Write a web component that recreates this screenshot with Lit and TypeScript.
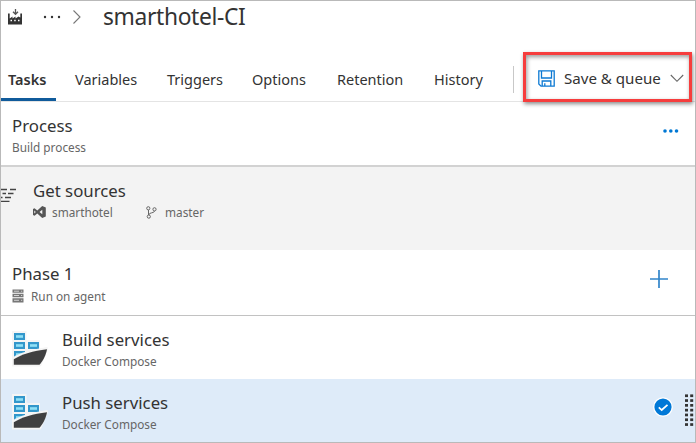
import { LitElement, html, css, svg } from "lit";
import { customElement } from "lit/decorators.js";

const shipIcon = html`<svg class="ship" width="36" height="36" viewBox="0 0 36 36">
  <path d="M0 0H14.5V9H28V17.5L35 16.5L35.5 18L28.5 35.5H0Z" fill="#f5f5f5"/>
  ${[[2, 2], [2, 11], [16, 11], [2, 20]].map(
    ([x, y]) => svg`<rect x=${x} y=${y} width="11" height="7" fill="#3397cb"/><rect x=${x + 2} y=${y + 2.2} width="7" height="2.6" fill="#8fe0f6"/>`
  )}
  <path d="M0.5 26.5C9 21 20 18.5 35.5 16L35.8 18.5L29 35H1Z" fill="#f5f5f5"/>
  <path d="M1.8 28.2C10 23 21 20 35 18.2C34 24 31 30 27.5 33.8H1.8Z" fill="#404041"/>
</svg>`;

@customElement("app-root")
export class AppRoot extends LitElement {
  static styles = css`
    :host {
      display: block;
      width: 696px;
      height: 443px;
      font-family: "Noto Sans", "Open Sans", sans-serif;
      color: #333;
    }
    * { box-sizing: border-box; }
    svg { display: block; flex: none; }
    .frame {
      width: 696px;
      height: 443px;
      border: 1px solid #b9b9b9;
      background: #fff;
      overflow: hidden;
      display: flex;
      flex-direction: column;
    }
    .frame > * { flex: none; }
    .crumbs { height: 56px; display: flex; align-items: flex-start; padding: 0 0 0 6px; }
    .crumbs .factory { margin-top: 7px; }
    .crumbs .dots { margin: 14px 0 0 19px; }
    .crumbs .chev { margin: 8px 0 0 11px; }
    h1 { margin: 0 0 0 21px; font-weight: 400; font-size: 22.8px; line-height: 32px; white-space: nowrap; letter-spacing: -0.35px; }
    .bar { height: 45px; display: flex; border-bottom: 1px solid #e4e4e4; position: relative; }
    .tab { font-size: 14.5px; line-height: 44px; white-space: nowrap; margin-right: 28px; }
    .tasks { width: 55px; padding-left: 7px; margin-right: 19px; font-weight: 600; border-bottom: 3px solid #105b9b; height: 44px; }
    .t1 { width: 64px; } .t2 { width: 57px; } .t3 { width: 57px; } .t4 { width: 69px; } .t5 { width: 51px; }
    .sep { width: 1px; height: 27px; margin-top: 9px; background: #c8c8c8; }
    .save {
      position: absolute;
      left: 522px;
      top: -5px;
      width: 169px;
      height: 50px;
      border: 3px solid #f63d3d;
      box-shadow: 1px 2px 4px rgba(0,0,0,.45), inset 1px 2px 4px rgba(0,0,0,.4);
      display: flex;
      align-items: center;
      padding: 2px 0 0 12px;
      font-size: 15.1px;
      white-space: nowrap;
    }
    .save .label { width: 99px; margin-left: 9px; margin-right: 7px; }
    .row { display: flex; position: relative; }
    .title { font-size: 16.8px; line-height: 22px; white-space: nowrap; }
    .sub { font-size: 11.8px; line-height: 18px; margin-top: 1px; color: #666; white-space: nowrap; display: flex; align-items: center; }
    .process { height: 65px; border-bottom: 2px solid #d2d2d2; padding: 13px 0 0 11px; }
    .sources { height: 83px; background: #f3f3f3; padding: 13px 0 0 0; }
    .sources .steps { margin: 8px 16px 0 0; }
    .phase { height: 66px; border-bottom: 1px solid #c2c2c2; padding: 13px 0 0 11px; }
    .phase .sub { margin-top: 2px; }
    .task { height: 63px; padding: 13px 0 0 11px; }
    .task .ship { margin: 2px 14px 0 0; }
    .selected { background: #deebf9; }
    .more { margin: 14px 16px 0 auto; }
    .plus { margin: 6px 26px 0 auto; }
    .check { margin: 5px 1px 0 auto; }
    .grip { margin: 2px 1px 0 11px; }
    .vs { margin-right: 6px; }
    .repo { width: 94px; }
    .branch { margin-right: 8px; }
    .server { margin-right: 7px; }
  `;

  render() {
    return html`<div class="frame">
      <div class="crumbs">
        <svg class="factory" width="17" height="18" viewBox="0 0 17 18">
          <path d="M8.5 1V6M6 3.8L8.5 6.3L11 3.8" fill="none" stroke="#555" stroke-width="1.3"/>
          <path d="M1 5.5H2.7V10.5L5.5 8.5V10.5L8.5 8.5V10.5L11.5 8.5L13.3 9.5V5.5H15V16.5H1Z" fill="#333"/>
          <path d="M3.5 11.8H5V13.3H3.5ZM7.2 11.8H8.7V13.3H7.2ZM11 11.8H12.5V13.3H11Z" fill="#fff"/>
        </svg>
        <svg class="dots" width="18" height="4" viewBox="0 0 18 4" fill="#333">
          <circle cx="2" cy="2" r="1.2"/><circle cx="9" cy="2" r="1.2"/><circle cx="16" cy="2" r="1.2"/>
        </svg>
        <svg class="chev" width="10" height="16" viewBox="0 0 10 16"><path d="M1.5 1.5L8 8L1.5 14.5" fill="none" stroke="#777" stroke-width="1.1"/></svg>
        <h1>smarthotel-CI</h1>
      </div>
      <div class="bar">
        <div class="tab tasks">Tasks</div>
        <div class="tab t1">Variables</div>
        <div class="tab t2">Triggers</div>
        <div class="tab t3">Options</div>
        <div class="tab t4">Retention</div>
        <div class="tab t5">History</div>
        <div class="sep"></div>
        <div class="save">
          <svg width="17" height="17" viewBox="0 0 17 17" fill="none" stroke="#0e7ad3" stroke-width="1.3">
            <path d="M.8 .8H16.2V16.2H3L.8 14Z"/><path d="M3.5 1V8H13.5V1M4.2 16V11H12.8V16M6.8 16V13.2"/>
          </svg>
          <span class="label">Save &amp; queue</span>
          <svg width="14" height="9" viewBox="0 0 14 9"><path d="M.8 1L7 7.3L13.2 1" fill="none" stroke="#666" stroke-width="1.1"/></svg>
        </div>
      </div>
      <div class="row process">
        <div><div class="title">Process</div><div class="sub">Build process</div></div>
        <svg class="more" width="16" height="4" viewBox="0 0 16 4" fill="#0078d4"><circle cx="2" cy="2" r="1.8"/><circle cx="7.8" cy="2" r="1.8"/><circle cx="13.5" cy="2" r="1.8"/></svg>
      </div>
      <div class="row sources">
        <svg class="steps" width="16" height="15" viewBox="0 0 16 15" stroke="#444" stroke-width="1.3">
          <path d="M0 1.5H6M9 1.5H15M1.5 5.5H5M7 5.5H12.5M0 9.5H1.5M4 9.5H10M0 13.3H8.5" fill="none"/>
        </svg>
        <div>
          <div class="title">Get sources</div>
          <div class="sub">
            <svg class="vs" width="13" height="12" viewBox="0 0 13 12"><path fill-rule="evenodd" d="M9.2 0L12.8 1.5V10.5L9.2 12L4.3 7.5L1.5 9.7L0 9V3L1.5 2.3L4.3 4.5ZM9.3 3.8L6.5 6L9.3 8.2ZM1.3 4.5V7.5L2.8 6Z" fill="#555"/></svg>
            <span class="repo">smarthotel</span>
            <svg class="branch" width="11" height="13" viewBox="0 0 11 13" fill="none" stroke="#666" stroke-width="1"><circle cx="2.3" cy="2.3" r="1.6"/><circle cx="8.5" cy="3.3" r="1.6"/><circle cx="2.8" cy="10.6" r="1.6"/><path d="M2.5 4V9M8.5 5C8.5 7.5 3 6 2.7 9"/></svg>
            <span>master</span>
          </div>
        </div>
      </div>
      <div class="row phase">
        <div>
          <div class="title">Phase 1</div>
          <div class="sub">
            <svg class="server" width="12" height="14" viewBox="0 0 12 14"><path d="M.5 .5H11.5V3.8H.5ZM.5 4.8H11.5V8.3H.5ZM.5 9.3H11.5V13.5H.5Z" fill="#777"/><path d="M2 2.2H7M2 6.5H7M2 11.3H7M9 2.2H10.2M9 6.5H10.2M9 11.3H10.2" stroke="#ddd" stroke-width=".9"/></svg>
            <span>Run on agent</span>
          </div>
        </div>
        <svg class="plus" width="20" height="20" viewBox="0 0 20 20"><path d="M10 1V19M1 10H19" stroke="#3285ca" stroke-width="1.7"/></svg>
      </div>
      <div class="row task">
        ${shipIcon}
        <div><div class="title">Build services</div><div class="sub">Docker Compose</div></div>
      </div>
      <div class="row task selected">
        ${shipIcon}
        <div><div class="title">Push services</div><div class="sub">Docker Compose</div></div>
        <svg class="check" width="20" height="20" viewBox="0 0 20 20"><circle cx="10" cy="10" r="9.8" fill="#fff"/><circle cx="10" cy="10" r="8.6" fill="#0078d7"/><path d="M5.8 10.3L8.7 13L14.5 7.8" fill="none" stroke="#fff" stroke-width="1.7"/></svg>
        <svg class="grip" width="9" height="33" viewBox="0 0 9 33" fill="#333">
          ${[0, 1, 2, 3, 4, 5, 6].map((i) => svg`<rect x="0" y=${i * 4.8 + 0.4} width="3" height="2.7"/><rect x="5.2" y=${i * 4.8 + 0.4} width="3" height="2.7"/>`)}
        </svg>
      </div>
    </div>`;
  }
}
